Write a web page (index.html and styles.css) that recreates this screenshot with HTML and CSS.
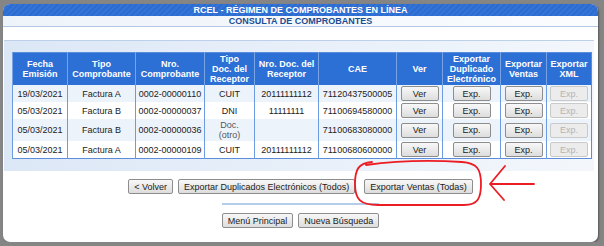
FILE: index.html
```html
<!DOCTYPE html>
<html lang="es">
<head>
  <meta charset="UTF-8"/>
  <title>Consulta de Comprobantes</title>
  <link rel="stylesheet" href="styles.css">
</head>
<body>
  <div class="panel">
    <div class="title-bar">RCEL - RÉGIMEN DE COMPROBANTES EN LÍNEA</div>
    <div class="subtitle-bar">CONSULTA DE COMPROBANTES</div>

    <div class="results">
      <table class="grid">
        <colgroup>
          <col style="width:55px"><col style="width:68px"><col style="width:69px"><col style="width:50px"><col style="width:64px">
          <col style="width:78px"><col style="width:46px"><col style="width:58px"><col style="width:46px"><col style="width:45px">
        </colgroup>
        <thead>
          <tr>
            <th>Fecha<br>Emisión</th>
            <th>Tipo<br>Comprobante</th>
            <th>Nro.<br>Comprobante</th>
            <th>Tipo<br>Doc. del<br>Receptor</th>
            <th>Nro. Doc. del<br>Receptor</th>
            <th>CAE</th>
            <th>Ver</th>
            <th>Exportar<br>Duplicado<br>Electrónico</th>
            <th>Exportar<br>Ventas</th>
            <th>Exportar<br>XML</th>
          </tr>
        </thead>
        <tbody>
          <tr class="alt">
            <td>19/03/2021</td><td>Factura A</td><td>0002-00000110</td><td>CUIT</td><td>20111111112</td><td>71120437500005</td>
            <td><button class="btn cell-btn">Ver</button></td>
            <td><button class="btn cell-btn">Exp.</button></td>
            <td><button class="btn cell-btn">Exp.</button></td>
            <td><button class="btn cell-btn" disabled>Exp.</button></td>
          </tr>
          <tr>
            <td>05/03/2021</td><td>Factura B</td><td>0002-00000037</td><td>DNI</td><td>11111111</td><td>71100694580000</td>
            <td><button class="btn cell-btn">Ver</button></td>
            <td><button class="btn cell-btn">Exp.</button></td>
            <td><button class="btn cell-btn">Exp.</button></td>
            <td><button class="btn cell-btn" disabled>Exp.</button></td>
          </tr>
          <tr class="alt">
            <td>05/03/2021</td><td>Factura B</td><td>0002-00000036</td><td class="muted">Doc.<br>(otro)</td><td></td><td>71100683080000</td>
            <td><button class="btn cell-btn">Ver</button></td>
            <td><button class="btn cell-btn">Exp.</button></td>
            <td><button class="btn cell-btn">Exp.</button></td>
            <td><button class="btn cell-btn" disabled>Exp.</button></td>
          </tr>
          <tr>
            <td>05/03/2021</td><td>Factura A</td><td>0002-00000109</td><td>CUIT</td><td>20111111112</td><td>71100680600000</td>
            <td><button class="btn cell-btn">Ver</button></td>
            <td><button class="btn cell-btn">Exp.</button></td>
            <td><button class="btn cell-btn">Exp.</button></td>
            <td><button class="btn cell-btn" disabled>Exp.</button></td>
          </tr>
        </tbody>
      </table>
    </div>

    <div class="actions">
      <button class="btn">&lt; Volver</button>
      <button class="btn">Exportar Duplicados Electrónicos (Todos)</button>
      <button class="btn wide-gap">Exportar Ventas (Todas)</button>
    </div>

    <div class="divider"></div>

    <div class="actions">
      <button class="btn">Menú Principal</button>
      <button class="btn">Nueva Búsqueda</button>
    </div>
  </div>

  <!-- red hand-drawn annotation over the page -->
  <svg class="annotation" width="604" height="246" viewBox="0 0 604 246">
    <path d="M372 162 C 358 163, 355 170, 355 184 C 355 199, 360 205, 378 205 L 464 205 C 478 205, 481 198, 481 184 C 481 169, 477 163, 462 162 C 430 160, 395 161, 366 165"
          fill="none" stroke="#ec1c24" stroke-width="1.8" stroke-linecap="round"/>
    <path d="M534 184 L 490 184 M 505 166 L 490 184 L 504 200"
          fill="none" stroke="#ec1c24" stroke-width="1.8" stroke-linecap="round" stroke-linejoin="round"/>
  </svg>
</body>
</html>
```

FILE: styles.css
```css
body {
  margin: 0;
  background: #858585;
  font-family: "Liberation Sans", Arial, sans-serif;
  font-size: 9px;
  color: #222;
}

.panel {
  margin: 4px 6px 0 3px;
  height: 238px;
  background: #fff;
  border-radius: 7px;
  box-shadow: 1px 1px 2px rgba(0,0,0,0.35);
}

.title-bar {
  height: 12px;
  line-height: 12px;
  text-align: center;
  font-weight: bold;
  color: #fff;
  background: #2a6cd2 repeating-linear-gradient(135deg, rgba(255,255,255,0.05) 0 2px, transparent 2px 4px);
  border-radius: 7px 7px 0 0;
}

.subtitle-bar {
  height: 10px;
  line-height: 10px;
  text-align: center;
  font-weight: bold;
  color: #1d4d92;
  background: linear-gradient(to right, #eef3fa, #fafcfe);
  border-bottom: 1px solid #b3c8e5;
}

.results {
  margin: 13px 4px 0 1px;
  padding: 11px 3px 12px 8px;
  background: linear-gradient(to right, #dce7f6, #f3f7fc);
  border-top: 1px solid #bcd0ea;
}

.grid {
  width: 579px;
  table-layout: fixed;
  border-collapse: collapse;
  border: 1px solid #5a8ddb;
  background: #fff;
}

.grid th {
  background: #2c70d6;
  color: #fff;
  font-weight: bold;
  line-height: 10px;
  padding: 1px 0;
  border-left: 1px solid #78a4e6;
  text-align: center;
}

.grid td {
  text-align: center;
  line-height: 10px;
  padding: 1px 0;
  border-left: 1px solid #6b9be0;
  white-space: nowrap;
}

.grid tr.alt td {
  background: #edf3fb;
}

.grid td.muted {
  color: #555;
}

.btn {
  font-family: "Liberation Sans", Arial, sans-serif;
  font-size: 9px;
  color: #222;
  height: 15px;
  padding: 0 5px;
  border: 1px solid #8d8d8d;
  border-radius: 2px;
  background: linear-gradient(#f8f8f8, #dddddd);
}

.btn:disabled {
  color: #b4b4b4;
  border-color: #c9c9c9;
  background: #ececec;
}

.cell-btn {
  width: 38px;
  padding: 0;
}

.actions {
  display: flex;
  justify-content: center;
  gap: 5px;
  margin-top: 8px;
}

.actions .wide-gap {
  margin-left: 4px;
}

.divider {
  width: 157px;
  height: 2px;
  margin: 9px auto 0;
  background: #b4cdea;
}

.annotation {
  position: absolute;
  left: 0;
  top: 0;
  pointer-events: none;
}
```
